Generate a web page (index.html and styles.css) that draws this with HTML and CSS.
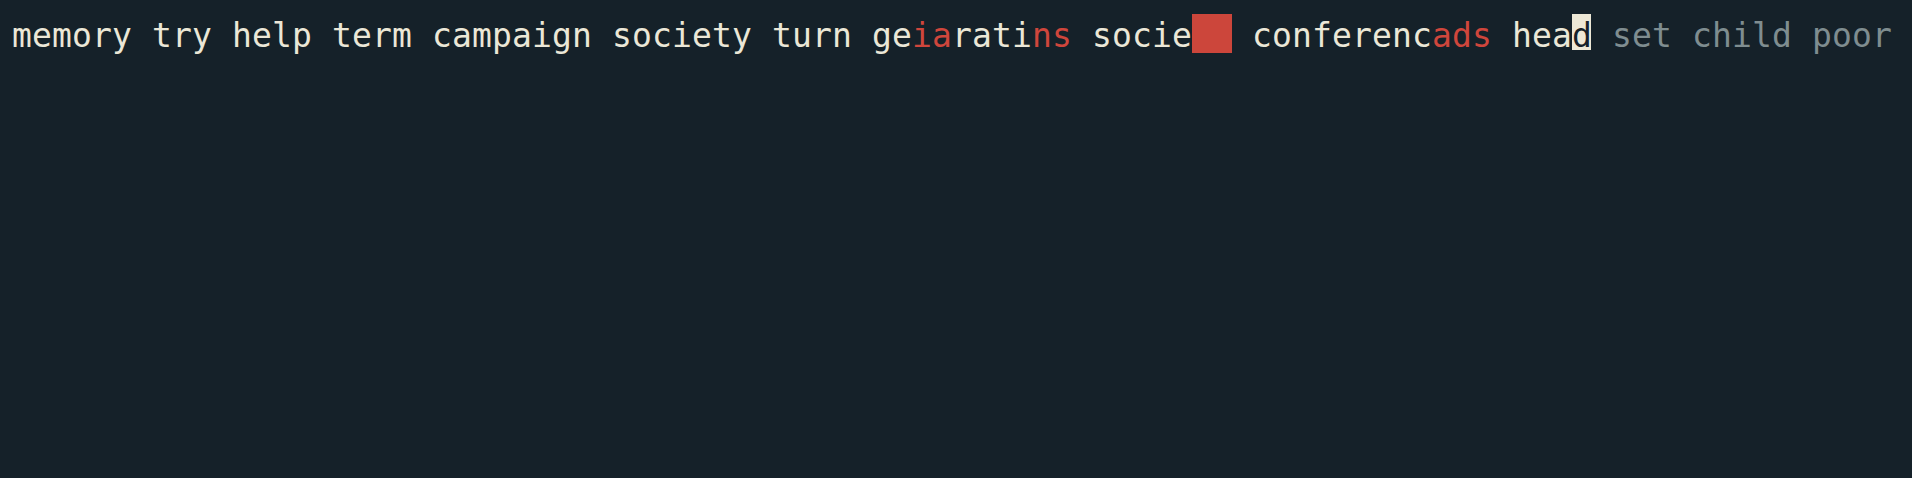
FILE: index.html
```html
<!DOCTYPE html>
<html lang="en">
<head>
<meta charset="utf-8">
<title>typing test</title>
<link rel="stylesheet" href="styles.css">
</head>
<body>
<div class="words">
  <div class="word"><span>m</span><span>e</span><span>m</span><span>o</span><span>r</span><span>y</span></div>
  <div class="word"><span>t</span><span>r</span><span>y</span></div>
  <div class="word"><span>h</span><span>e</span><span>l</span><span>p</span></div>
  <div class="word"><span>t</span><span>e</span><span>r</span><span>m</span></div>
  <div class="word"><span>c</span><span>a</span><span>m</span><span>p</span><span>a</span><span>i</span><span>g</span><span>n</span></div>
  <div class="word"><span>s</span><span>o</span><span>c</span><span>i</span><span>e</span><span>t</span><span>y</span></div>
  <div class="word"><span>t</span><span>u</span><span>r</span><span>n</span></div>
  <div class="word"><span>g</span><span>e</span><span class="bad">i</span><span class="bad">a</span><span>r</span><span>a</span><span>t</span><span>i</span><span class="bad">n</span><span class="bad">s</span></div>
  <div class="word"><span>s</span><span>o</span><span>c</span><span>i</span><span>e</span><span class="missed">t</span><span class="missed">y</span></div>
  <div class="word"><span>c</span><span>o</span><span>n</span><span>f</span><span>e</span><span>r</span><span>e</span><span>n</span><span>c</span><span class="bad">a</span><span class="bad">d</span><span class="bad">s</span></div>
  <div class="word"><span>h</span><span>e</span><span>a</span><span class="cursor">d</span></div>
  <div class="word todo"><span>s</span><span>e</span><span>t</span></div>
  <div class="word todo"><span>c</span><span>h</span><span>i</span><span>l</span><span>d</span></div>
  <div class="word todo"><span>p</span><span>o</span><span>o</span><span>r</span></div>
</div>
</body>
</html>
```
FILE: styles.css
```css
html, body {
  margin: 0;
  padding: 0;
  background: #152129;
  height: 100%;
  overflow: hidden;
}

.words {
  display: flex;
  flex-wrap: nowrap;
  gap: 20px;
  padding: 14px 0 0 12px;
  font-family: "DejaVu Sans Mono", "Liberation Mono", monospace;
  font-size: 33px;
  color: #ebe7d7;
  white-space: nowrap;
}

.word {
  display: flex;
}

.word span {
  display: block;
  width: 20px;
  height: 39px;
  box-sizing: border-box;
  padding-top: 5px;
  line-height: 34px;
  text-align: center;
}

.word span.bad {
  color: #cf463c;
}

.word span.missed {
  background: #cc463b;
  color: #cc463b;
  overflow: hidden;
}

.word span.cursor {
  color: #152129;
  background: linear-gradient(#ede8d6, #ede8d6) left top / 19px 36px no-repeat;
}

.word.todo span {
  color: #7f8d90;
}
```
